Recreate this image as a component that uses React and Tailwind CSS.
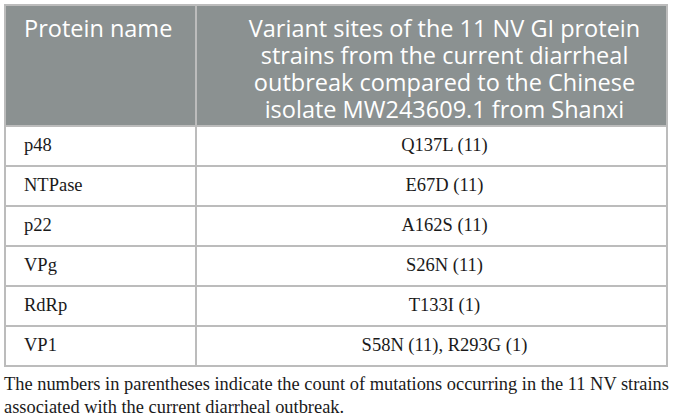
const rows = [
    ["p48", "Q137L (11)"],
    ["NTPase", "E67D (11)"],
    ["p22", "A162S (11)"],
    ["VPg", "S26N (11)"],
    ["RdRp", "T133I (1)"],
    ["VP1", "S58N (11), R293G (1)"],
];

export default function App() {
    return (
        <div className="w-[673px] h-[420px] bg-white overflow-hidden pt-[4px] pl-[4px]">
            <table className="w-[664px] table-fixed border-collapse border-2 border-[#bcbcbc]">
                <colgroup>
                    <col className="w-[191px]" />
                    <col />
                </colgroup>
                <thead>
                    <tr className="bg-[#8b9191] text-white font-['Open_Sans',sans-serif] text-[23.5px] leading-[27px] h-[121px]">
                        <th className="align-top text-left font-normal pl-[18px] pt-[9px] border-r-2 border-[#bcbcbc] whitespace-nowrap">
                            Protein name
                        </th>
                        <th className="align-top text-center font-normal pl-[26px] pr-[0px] pt-[9px] whitespace-nowrap">
                            Variant sites of the 11 NV GI protein
                            <br />
                            strains from the current diarrheal
                            <br />
                            outbreak compared to the Chinese
                            <br />
                            isolate MW243609.1 from Shanxi
                        </th>
                    </tr>
                </thead>
                <tbody className="font-['Liberation_Serif',serif] text-[18.5px] text-[#1a1a1a]">
                    {rows.map((row) => (
                        <tr key={row[0]} className="h-[40px] border-t-2 border-[#bcbcbc]">
                            <td className="pl-[18px] border-r-2 border-[#bcbcbc]">{row[0]}</td>
                            <td className="text-center pl-[26px]">{row[1]}</td>
                        </tr>
                    ))}
                </tbody>
            </table>
            <p className="font-['Liberation_Serif',serif] text-[18.4px] leading-[23px] text-[#1a1a1a] mt-[6px] whitespace-nowrap">
                The numbers in parentheses indicate the count of mutations occurring in the 11 NV strains
                <br />
                associated with the current diarrheal outbreak.
            </p>
        </div>
    );
}
